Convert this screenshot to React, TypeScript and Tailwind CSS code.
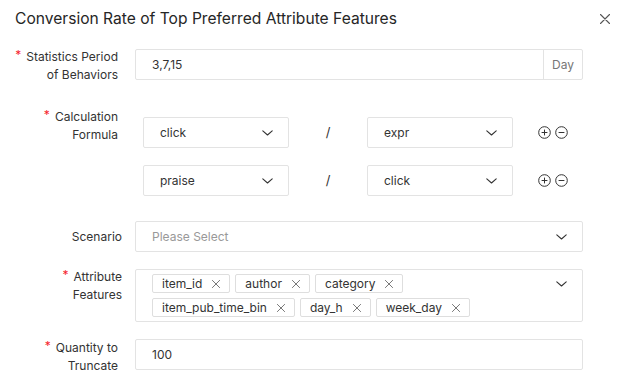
import React from "react";

const Chevron = () => (
  <svg width="11" height="6" viewBox="0 0 11 6" fill="none">
    <path d="M0.8 0.8 L5.5 5 L10.2 0.8" stroke="#333" strokeWidth="1.1" strokeLinecap="round" strokeLinejoin="round" />
  </svg>
);

const Close = ({ size = 10, color = "#555", w = 1.1 }: { size?: number; color?: string; w?: number }) => (
  <svg width={size} height={size} viewBox="0 0 10 10" fill="none">
    <path d="M0.5 0.5 L9.5 9.5 M9.5 0.5 L0.5 9.5" stroke={color} strokeWidth={w} strokeLinecap="round" />
  </svg>
);

const PlusCircle = () => (
  <svg width="13" height="13" viewBox="0 0 13 13" fill="none">
    <circle cx="6.5" cy="6.5" r="5.8" stroke="#333" strokeWidth="1" />
    <path d="M6.5 3.6 V9.4 M3.6 6.5 H9.4" stroke="#333" strokeWidth="1" />
  </svg>
);

const MinusCircle = () => (
  <svg width="13" height="13" viewBox="0 0 13 13" fill="none">
    <circle cx="6.5" cy="6.5" r="5.8" stroke="#333" strokeWidth="1" />
    <path d="M3.6 6.5 H9.4" stroke="#333" strokeWidth="1" />
  </svg>
);

const Req = () => <span className="text-[#f5222d] text-[12px] mr-[5px] relative top-[-2px]">*</span>;

const Select = ({ value }: { value: string }) => (
  <div className="w-[146px] h-[31px] border border-[#e3e3e3] rounded-[2px] flex items-center justify-between pl-[16px] pr-[15px] text-[12px] text-[#333]">
    <span>{value}</span>
    <Chevron />
  </div>
);

const Tag = ({ label }: { label: string }) => (
  <div className="h-[19px] border border-[#dedede] rounded-[2px] flex items-center pl-[9px] pr-[9px] gap-[10px] text-[12px] text-[#333] leading-none">
    <span>{label}</span>
    <Close size={8} color="#555" w={1} />
  </div>
);

const FormulaRow = ({ a, b }: { a: string; b: string }) => (
  <div className="flex items-center">
    <div className="ml-[8px]"><Select value={a} /></div>
    <div className="w-[78px] text-center text-[13px] text-[#333]">/</div>
    <Select value={b} />
    <div className="ml-[25px] flex items-center gap-[4px]">
      <PlusCircle />
      <MinusCircle />
    </div>
  </div>
);

export default function App() {
  return (
    <div className="w-[620px] h-[392px] bg-white overflow-hidden font-['Inter',sans-serif] text-[#333]">
      <div className="h-[38px] flex items-center justify-between pl-[15px] pr-[10px]">
        <div className="text-[15.6px] text-[#262626]">Conversion Rate of Top Preferred Attribute Features</div>
        <Close />
      </div>

      {/* Row 1 */}
      <div className="flex items-start mt-[10px]">
        <div className="w-[135px] pl-[14px] pr-[17px] text-right text-[12px] leading-[18px] text-[#333]">
          <Req />Statistics Period of Behaviors
        </div>
        <div className="mt-[1px] w-[448px] h-[31px] border border-[#e3e3e3] rounded-[2px] flex items-stretch">
          <div className="flex-1 flex items-center pl-[16px] text-[12px] text-[#333]">3,7,15</div>
          <div className="w-[39px] border-l border-[#e3e3e3] flex items-center justify-center text-[12px] text-[#777]">Day</div>
        </div>
      </div>

      {/* Row 2 */}
      <div className="flex items-start mt-[24px]">
        <div className="w-[135px] pl-[14px] pr-[17px] text-right text-[12px] leading-[18px] text-[#333]">
          <Req />Calculation Formula
        </div>
        <div className="pt-[9px] flex flex-col gap-[17px]">
          <FormulaRow a="click" b="expr" />
          <FormulaRow a="praise" b="click" />
        </div>
      </div>

      {/* Scenario */}
      <div className="flex items-start mt-[25px]">
        <div className="w-[135px] pl-[18px] pr-[13px] text-right text-[12px] leading-[31px] text-[#333]">Scenario</div>
        <div className="w-[448px] h-[31px] border border-[#e3e3e3] rounded-[2px] flex items-center justify-between pl-[16px] pr-[15px] text-[12px] text-[#999]">
          <span>Please Select</span>
          <Chevron />
        </div>
      </div>

      {/* Attribute Features */}
      <div className="flex items-start mt-[17px]">
        <div className="w-[135px] pl-[18px] pr-[13px] text-right text-[12px] leading-[18px] text-[#333] mt-[-1px]">
          <Req />Attribute Features
        </div>
        <div className="w-[448px] h-[53px] border border-[#e3e3e3] rounded-[2px] flex items-start justify-between pl-[16px] pr-[15px] pt-[4px]">
          <div className="flex flex-wrap gap-[5px] w-[392px]">
            {["item_id", "author", "category", "item_pub_time_bin", "day_h", "week_day"].map((t) => (
              <Tag key={t} label={t} />
            ))}
          </div>
          <div className="mt-[7px]"><Chevron /></div>
        </div>
      </div>

      {/* Quantity */}
      <div className="flex items-start mt-[17px]">
        <div className="w-[135px] pl-[14px] pr-[17px] text-right text-[12px] leading-[18px] text-[#333]">
          <Req />Quantity to Truncate
        </div>
        <div className="w-[448px] h-[31px] border border-[#e3e3e3] rounded-[2px] flex items-center pl-[16px] text-[12px] text-[#333]">100</div>
      </div>
    </div>
  );
}
